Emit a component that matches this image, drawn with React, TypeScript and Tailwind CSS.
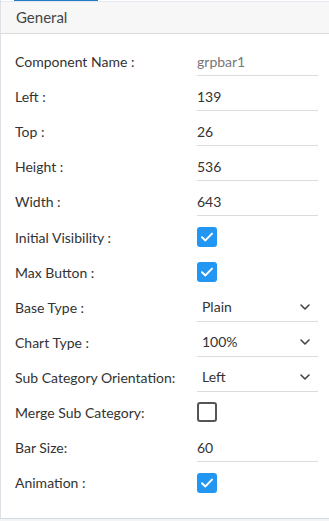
import { ChevronDown } from 'lucide-react'

type Row =
  | { label: string; kind: 'text'; value: string; disabled?: boolean }
  | { label: string; kind: 'check'; checked: boolean }
  | { label: string; kind: 'select'; value: string }

const rows: Row[] = [
  { label: 'Component Name :', kind: 'text', value: 'grpbar1', disabled: true },
  { label: 'Left :', kind: 'text', value: '139' },
  { label: 'Top :', kind: 'text', value: '26' },
  { label: 'Height :', kind: 'text', value: '536' },
  { label: 'Width :', kind: 'text', value: '643' },
  { label: 'Initial Visibility :', kind: 'check', checked: true },
  { label: 'Max Button :', kind: 'check', checked: true },
  { label: 'Base Type :', kind: 'select', value: 'Plain' },
  { label: 'Chart Type :', kind: 'select', value: '100%' },
  { label: 'Sub Category Orientation:', kind: 'select', value: 'Left' },
  { label: 'Merge Sub Category:', kind: 'check', checked: false },
  { label: 'Bar Size:', kind: 'text', value: '60' },
  { label: 'Animation :', kind: 'check', checked: true },
]

const Checkbox = ({ checked }: { checked: boolean }) =>
  checked ? (
    <div className="w-[20px] h-[20px] rounded-[3px] bg-[#2196f3] flex items-center justify-center">
      <svg width="14" height="14" viewBox="0 0 14 14" fill="none">
        <path d="M2 7.2 L5.4 10.4 L12 3.6" stroke="white" strokeWidth="2" strokeLinecap="round" strokeLinejoin="round" />
      </svg>
    </div>
  ) : (
    <div className="w-[20px] h-[20px] rounded-[3px] border-2 border-[#555]" />
  )

const Field = ({ row }: { row: Row }) => {
  if (row.kind === 'check') return <Checkbox checked={row.checked} />
  if (row.kind === 'select')
    return (
      <div className="w-[121px] h-[29px] border-b border-[#dcdcdc] flex items-center justify-between pl-[5px] pr-[5px] text-[#333]">
        <span>{row.value}</span>
        <ChevronDown size={16} strokeWidth={2.4} className="text-[#444]" />
      </div>
    )
  return (
    <div
      className={`w-[121px] h-[29px] border-b border-[#dcdcdc] flex items-center ${
        row.disabled ? 'text-[#777]' : 'text-[#333]'
      }`}>
      {row.value}
    </div>
  )
}

export default function App() {
  return (
    <div
      className="w-[329px] h-[521px] bg-[#f3f4f6] text-[14px]"
      style={{ fontFamily: 'Lato, "Open Sans", sans-serif' }}>
      <div className="h-[519px] bg-white border-l border-[#dde1e6] border-b border-b-[#d5dae0] flex flex-col">
        <div className="h-[1px] flex">
          <div className="ml-[13px] w-[84px] bg-[#1e7bc4]" />
        </div>
        <div className="h-[33px] bg-[#f7f7f7] border-t border-[#e4eaf0] border-b border-b-[#dcdcdc] flex items-center pl-[15px] text-[15px] text-[#444]">
          General
        </div>
        <div className="pt-[10px] flex flex-col">
          {rows.map((row) => (
            <div key={row.label} className="h-[35.1px] flex items-center pl-[14px]">
              <div className="w-[182px] text-[#333]">{row.label}</div>
              <Field row={row} />
            </div>
          ))}
        </div>
      </div>
    </div>
  )
}
